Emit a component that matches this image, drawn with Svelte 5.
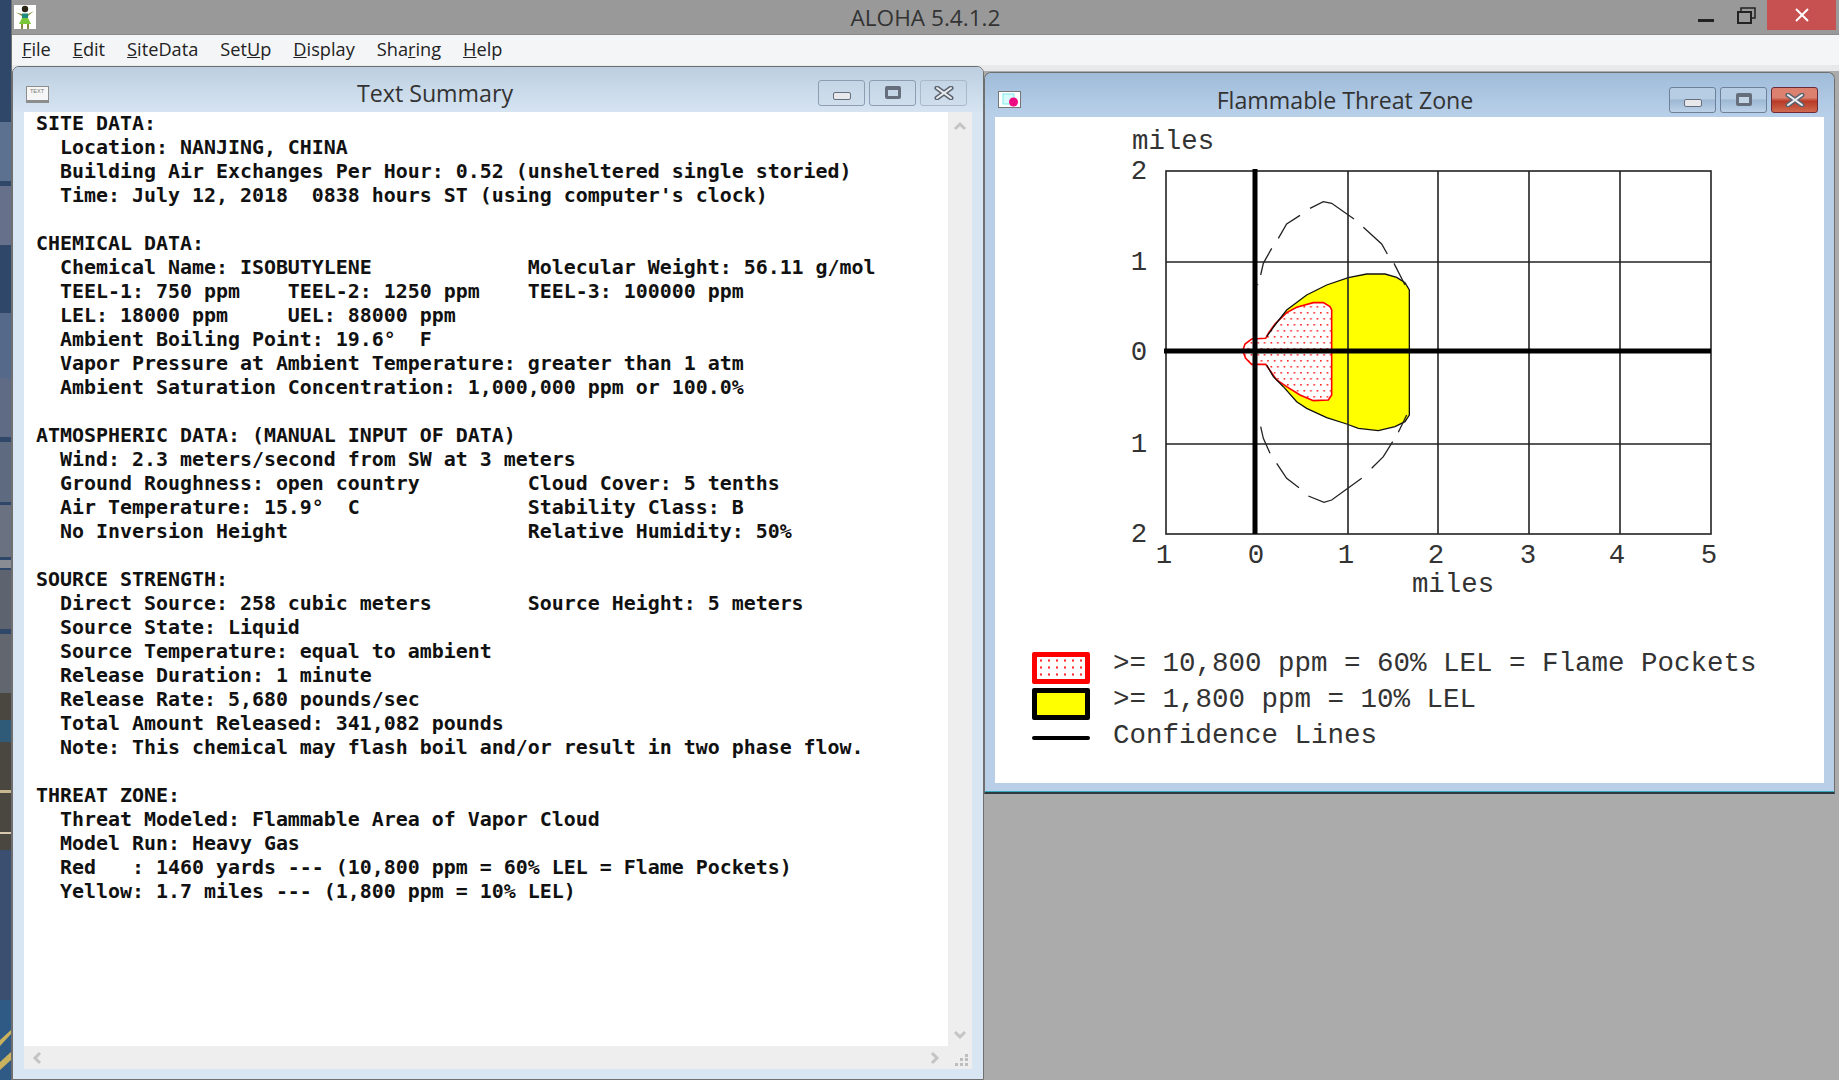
<script>
  const menus = [
    ['F', 'ile'], ['E', 'dit'], ['S', 'iteData'], ['Set', 'U', 'p'], ['D', 'isplay'], ['Sha', 'r', 'ing'], ['H', 'elp']
  ];

  const summary = `SITE DATA:
  Location: NANJING, CHINA
  Building Air Exchanges Per Hour: 0.52 (unsheltered single storied)
  Time: July 12, 2018  0838 hours ST (using computer's clock)

CHEMICAL DATA:
  Chemical Name: ISOBUTYLENE             Molecular Weight: 56.11 g/mol
  TEEL-1: 750 ppm    TEEL-2: 1250 ppm    TEEL-3: 100000 ppm
  LEL: 18000 ppm     UEL: 88000 ppm
  Ambient Boiling Point: 19.6°  F
  Vapor Pressure at Ambient Temperature: greater than 1 atm
  Ambient Saturation Concentration: 1,000,000 ppm or 100.0%

ATMOSPHERIC DATA: (MANUAL INPUT OF DATA)
  Wind: 2.3 meters/second from SW at 3 meters
  Ground Roughness: open country         Cloud Cover: 5 tenths
  Air Temperature: 15.9°  C              Stability Class: B
  No Inversion Height                    Relative Humidity: 50%

SOURCE STRENGTH:
  Direct Source: 258 cubic meters        Source Height: 5 meters
  Source State: Liquid
  Source Temperature: equal to ambient
  Release Duration: 1 minute
  Release Rate: 5,680 pounds/sec
  Total Amount Released: 341,082 pounds
  Note: This chemical may flash boil and/or result in two phase flow.

THREAT ZONE:
  Threat Modeled: Flammable Area of Vapor Cloud
  Model Run: Heavy Gas
  Red   : 1460 yards --- (10,800 ppm = 60% LEL = Flame Pockets)
  Yellow: 1.7 miles --- (1,800 ppm = 10% LEL)`;

  // outlines traced at 3x from (1100,120)
  const pts = (list) => list.map(([x, y]) => `${1100 + x / 3},${120 + y / 3}`).join(' ');

  const yellow = pts([
    [500, 650], [525, 615], [560, 570], [620, 525], [680, 495], [745, 473], [800, 462], [855, 462], [890, 472],
    [915, 488], [928, 510], [928, 885], [915, 905], [885, 920], [835, 932], [775, 925], [740, 912], [680, 893],
    [620, 865], [590, 845], [550, 800], [520, 770], [500, 735]
  ]);
  const red = pts([
    [428, 692], [435, 672], [455, 657], [497, 655], [505, 640], [525, 612], [560, 578], [590, 562], [640, 548],
    [670, 548], [690, 560], [695, 570], [695, 825], [685, 840], [640, 842], [600, 825], [560, 800], [530, 780],
    [497, 733], [455, 733], [437, 715]
  ]);
  const dashes = [
    [[472, 495], [474, 493]],
    [[482, 465], [490, 430], [515, 385]],
    [[535, 355], [560, 312], [600, 286]],
    [[630, 265], [670, 245], [695, 250], [762, 297]],
    [[790, 322], [845, 372], [862, 402]],
    [[882, 430], [915, 495]],
    [[482, 920], [490, 955], [510, 1000]],
    [[530, 1030], [560, 1075], [597, 1103]],
    [[625, 1128], [672, 1147], [695, 1140], [785, 1075]],
    [[815, 1045], [850, 1010], [878, 965]],
    [[895, 937], [920, 885]]
  ].map(pts);

  const gridX = [1348, 1438, 1529, 1620];
  const gridY = [262, 444];
  const xLabels = [[1164, '1'], [1256, '0'], [1346, '1'], [1436, '2'], [1528, '3'], [1617, '4'], [1709, '5']];
  const yLabels = [[179, '2'], [270, '1'], [360, '0'], [452, '1'], [542, '2']];

  const stripTiles = [
    [122, 59, '#5c7090'], [186, 59, '#66708a'], [313, 65, '#55698a'], [378, 59, '#5f6b84'],
    [442, 60, '#5e6a80'], [505, 52, '#6a7180'], [560, 8, '#8a8c94'], [570, 59, '#5d6470'], [634, 59, '#62666e']
  ];
</script>

{#snippet controls()}
  <div class="controls">
    <div class="ctl"><span class="ico-min"></span></div>
    <div class="ctl"><span class="ico-max"></span></div>
    <div class="ctl close">
      <svg width="20" height="14" viewBox="0 0 20 14">
        <path d="M3 2 L17 12 M17 2 L3 12" stroke="#5c6470" stroke-width="5" stroke-linecap="round" />
        <path d="M3 2 L17 12 M17 2 L3 12" stroke="#eef0f3" stroke-width="2" stroke-linecap="round" />
      </svg>
    </div>
  </div>
{/snippet}

<div class="app">
  <svg class="strip" width="11" height="1080" viewBox="0 0 11 1080">
    <rect width="11" height="1080" fill="#2f4869" />
    {#each stripTiles as [y, h, fill]}
      <rect {y} width="11" height={h} {fill} />
    {/each}
    <rect y="693" width="11" height="157" fill="#4a4640" />
    <rect y="720" width="11" height="22" fill="#2f5a78" />
    <rect y="790" width="11" height="3" fill="#c8b890" />
    <rect y="832" width="11" height="2" fill="#d8c8b0" />
    <rect y="850" width="11" height="150" fill="#3b5070" />
    <rect y="1000" width="11" height="80" fill="#2f5a85" />
    <path d="M0 1040 L11 1030 V1034 L0 1046 Z M0 1062 L11 1052 V1060 L0 1070 Z" fill="#c9b25e" />
  </svg>

  <div class="main">
    <header class="appbar">
      <svg class="appicon" width="22" height="24" viewBox="0 0 22 24">
        <rect width="22" height="24" fill="#fff" />
        <circle cx="11" cy="4" r="3.2" fill="#2a2412" />
        <path d="M2 7.5 L8 9 H14 L20 6 L14 11 H8 Z" fill="#8c8a40" />
        <path d="M8 8.5 H14 V13 H8 Z" fill="#1f8a80" />
        <path d="M8 13 H14 L17 19 H5 Z" fill="#7ac83a" />
        <path d="M8 19 V24 M14 19 V24" stroke="#8a8a3a" stroke-width="2" />
      </svg>
      <span class="apptitle">ALOHA 5.4.1.2</span>
      <div class="sysbtns">
        <svg class="sys-min" width="16" height="3"><rect width="16" height="3" fill="#222" /></svg>
        <svg class="sys-restore" width="19" height="17" viewBox="0 0 19 17">
          <path d="M4 4 V1 H18 V11 H14" fill="none" stroke="#222" stroke-width="1.5" />
          <rect x="1" y="5" width="13" height="11" fill="none" stroke="#222" stroke-width="2" />
        </svg>
        <div class="sys-close">
          <svg width="14" height="14" viewBox="0 0 14 14"><path d="M1 1 L13 13 M13 1 L1 13" stroke="#fff" stroke-width="2" /></svg>
        </div>
      </div>
    </header>

    <nav class="menubar">
      {#each menus as m}
        <span class="menu">
          {#if m.length === 2}<u>{m[0]}</u>{m[1]}{:else}{m[0]}<u>{m[1]}</u>{m[2]}{/if}
        </span>
      {/each}
    </nav>

    <div class="workspace">
      <section class="window summary">
        <div class="titlebar">
          <svg class="winicon" width="23" height="17" viewBox="0 0 23 17">
            <rect width="23" height="17" fill="#8d8d8d" />
            <rect x="1" y="1" width="21" height="13" fill="#f6f6f6" />
            <text x="11" y="7" text-anchor="middle" class="tiny">TEXT</text>
          </svg>
          <span class="wintitle">Text Summary</span>
          {@render controls()}
        </div>
        <div class="client-grid">
          <pre class="report">{summary}</pre>
          <div class="vscroll">
            <svg width="14" height="10" viewBox="0 0 14 10"><path d="M2 8 L7 3 L12 8" class="chev" /></svg>
            <svg width="14" height="10" viewBox="0 0 14 10"><path d="M2 2 L7 7 L12 2" class="chev" /></svg>
          </div>
          <div class="hscroll">
            <svg width="10" height="14" viewBox="0 0 10 14"><path d="M8 2 L3 7 L8 12" class="chev" /></svg>
            <svg width="10" height="14" viewBox="0 0 10 14"><path d="M2 2 L7 7 L2 12" class="chev" /></svg>
          </div>
          <div class="grip">
            <svg width="13" height="13" viewBox="0 0 13 13" fill="#bdbdbd">
              <rect x="10" y="1" width="3" height="3" /><rect x="5" y="5" width="3" height="3" /><rect x="10" y="5" width="3" height="3" />
              <rect x="0" y="10" width="3" height="3" /><rect x="5" y="10" width="3" height="3" /><rect x="10" y="10" width="3" height="3" />
            </svg>
          </div>
        </div>
      </section>

      <section class="window threat">
        <div class="titlebar">
          <svg class="winicon" width="23" height="18" viewBox="0 0 23 18">
            <rect x=".5" y=".5" width="22" height="16" fill="#fff" stroke="#777" />
            <rect x="5" y="3" width="11" height="10" fill="#d8fbfb" stroke="#7fecec" />
            <circle cx="15.5" cy="11" r="4.5" fill="#ee0a80" />
          </svg>
          <span class="wintitle">Flammable Threat Zone</span>
          {@render controls()}
        </div>
        <div class="client">
          <svg class="plot" width="828" height="533" viewBox="995 117 828 533">
            <defs>
              <pattern id="flame" width="6.6" height="12" patternUnits="userSpaceOnUse">
                <rect x="0" y="0" width="1.6" height="1.6" fill="#f22" />
                <rect x="3.3" y="6" width="1.6" height="1.6" fill="#f22" />
              </pattern>
            </defs>
            <text x="1132" y="149" class="plotlabel">miles</text>
            <text x="1453" y="592" text-anchor="middle" class="plotlabel">miles</text>

            <polygon points={yellow} fill="#ff0" />
            <polygon points={red} fill="#fff" />
            <polygon points={red} fill="url(#flame)" stroke="#f00" stroke-width="1.6" />
            <polyline points={yellow} fill="none" stroke="#111" stroke-width="1.3" />

            <rect x="1166" y="171" width="545" height="363" fill="none" stroke="#222" stroke-width="1.6" />
            {#each gridX as x}
              <line x1={x} x2={x} y1="171" y2="534" stroke="#222" stroke-width="1.6" />
            {/each}
            {#each gridY as y}
              <line x1="1166" x2="1711" y1={y} y2={y} stroke="#222" stroke-width="1.6" />
            {/each}
            <line x1="1255" x2="1255" y1="169" y2="534" stroke="#000" stroke-width="5" />
            <line x1="1164" x2="1711" y1="351" y2="351" stroke="#000" stroke-width="5" />

            {#each dashes as d}
              <polyline points={d} fill="none" stroke="#222" stroke-width="1.3" />
            {/each}

            {#each yLabels as [y, t]}
              <text x="1139" {y} text-anchor="middle" class="plotlabel">{t}</text>
            {/each}
            {#each xLabels as [x, t]}
              <text {x} y="563" text-anchor="middle" class="plotlabel">{t}</text>
            {/each}
          </svg>
          <div class="legend">
            <span class="swatch flame"></span><span class="entry">&gt;= 10,800 ppm = 60% LEL = Flame Pockets</span>
            <span class="swatch lel"></span><span class="entry">&gt;= 1,800 ppm = 10% LEL</span>
            <span class="swatch conf"></span><span class="entry">Confidence Lines</span>
          </div>
        </div>
      </section>
    </div>
  </div>
</div>

<style>
  :global(body) {
    margin: 0;
    background: #ababab;
  }

  .app {
    display: flex;
    width: 1839px;
    height: 1080px;
    overflow: hidden;
    font-family: "Open Sans", sans-serif;
  }

  .strip {
    flex: none;
    display: block;
    border-right: 1px solid #6e6e6e;
    box-sizing: content-box;
  }

  .main {
    flex: 1;
    min-width: 0;
    display: flex;
    flex-direction: column;
  }

  .appbar {
    flex: none;
    position: relative;
    height: 35px;
    display: flex;
    align-items: center;
    justify-content: center;
    background: #999;
    border-bottom: 1px solid #8a8a8a;
    box-sizing: border-box;
  }

  .appicon {
    position: absolute;
    left: 2px;
    top: 5px;
  }

  .apptitle {
    color: #333;
    font-size: 22.6px;
  }

  .sysbtns {
    position: absolute;
    right: 3px;
    top: 0;
    display: flex;
    align-items: flex-start;
  }

  .sys-min {
    margin-top: 19px;
    margin-right: 23px;
  }

  .sys-restore {
    margin-top: 7px;
    margin-right: 11px;
  }

  .sys-close {
    width: 69px;
    height: 30px;
    background: #c75050;
    display: flex;
    align-items: center;
    justify-content: center;
  }

  .menubar {
    flex: none;
    height: 30px;
    display: flex;
    align-items: center;
    gap: 22px;
    padding: 0 0 2px 10px;
    box-sizing: border-box;
    background: #f4f5f7;
    color: #222;
    font-size: 18.2px;
  }

  .workspace {
    flex: 1;
    min-height: 0;
    display: flex;
    align-items: flex-start;
    background: linear-gradient(#e8e9eb 0 6px, #ababab 6px);
  }

  .window {
    flex: none;
    display: flex;
    flex-direction: column;
    box-sizing: border-box;
    border: 1px solid #6f6f6f;
    border-radius: 7px 7px 0 0;
  }

  .summary {
    width: 972px;
    height: 1014px;
    margin-top: 1px;
    background: #d8e5f2;
  }

  .threat {
    width: 851px;
    height: 722px;
    margin-top: 7px;
    background: #b9cfe8;
    border-bottom: 2px solid #2a3a40;
    box-shadow: inset 0 -1px 0 #33aabb;
  }

  .titlebar {
    flex: none;
    display: flex;
    align-items: center;
    box-sizing: border-box;
    border-radius: 7px 7px 0 0;
  }

  .summary .titlebar {
    height: 45px;
    padding: 6px 16px 0 13px;
    background: linear-gradient(#bccfe0, #d6e4f2);
  }

  .threat .titlebar {
    height: 44px;
    padding: 9px 16px 0 13px;
    background: linear-gradient(#9fbcd9, #b9d0ea);
  }

  .winicon {
    flex: none;
    display: block;
  }

  .summary .winicon {
    margin-top: 3px;
  }

  .tiny {
    font: 5.5px "Liberation Sans", sans-serif;
    fill: #777;
  }

  .wintitle {
    flex: 1;
    text-align: center;
    color: #333;
    font-size: 23.2px;
  }

  .summary .wintitle {
    padding-left: 3px;
  }

  .controls {
    flex: none;
    display: flex;
    gap: 4px;
  }

  .ctl {
    width: 47px;
    height: 26px;
    box-sizing: border-box;
    display: flex;
    align-items: center;
    justify-content: center;
    border: 1px solid #8c9db4;
    border-radius: 3px;
    background: linear-gradient(#c4d5e6, #d0deec);
  }

  .ico-min {
    width: 16px;
    height: 6px;
    margin-top: 6px;
    border: 1.5px solid #666e7c;
    border-radius: 2px;
    background: #e6e8eb;
  }

  .ico-max {
    width: 10px;
    height: 6px;
    border: 3px solid #666e7c;
    border-top-width: 4px;
    border-radius: 2px;
    background: #c4d5e6;
  }

  .summary .ctl.close {
    border-color: #aab8c9;
  }

  .threat .ctl {
    background: linear-gradient(#b6cde3 0 45%, #9db8d4 50%, #bcd2e8);
    border-color: #6f8198;
  }

  .threat .ctl.close {
    background: linear-gradient(#dc8070 0 40%, #b83a26 55%, #d06a50);
    border-color: #6a2a38;
  }

  .client-grid {
    flex: 1;
    min-height: 0;
    display: grid;
    grid-template-columns: 1fr 24px;
    grid-template-rows: 1fr 23px;
    margin: 0 11px 10px;
    background: #eee;
  }

  .report {
    margin: 0;
    padding: 0 0 0 12px;
    background: #fff;
    color: #111;
    font: bold 19.93px/24px "DejaVu Sans Mono", monospace;
    overflow: hidden;
  }

  .vscroll {
    display: flex;
    flex-direction: column;
    align-items: center;
    justify-content: space-between;
    padding: 9px 0 6px;
  }

  .hscroll {
    display: flex;
    align-items: center;
    justify-content: space-between;
    padding: 0 8px;
  }

  .grip {
    display: flex;
    align-items: flex-end;
    justify-content: flex-end;
    padding: 0 4px 3px 0;
  }

  .chev {
    fill: none;
    stroke: #c4c4c4;
    stroke-width: 3;
  }

  .client {
    flex: 1;
    min-height: 0;
    margin: 0 10px 9px;
    background: #fff;
    display: flex;
    flex-direction: column;
  }

  .plot {
    flex: none;
    display: block;
  }

  .plotlabel {
    font: 27.4px "Liberation Mono", monospace;
    fill: #333;
  }

  .legend {
    display: grid;
    grid-template-columns: 58px 1fr;
    grid-auto-rows: 36px;
    column-gap: 23px;
    align-items: center;
    padding-left: 37px;
    color: #333;
    font: 27.5px "Liberation Mono", monospace;
  }

  .entry {
    padding-bottom: 9px;
  }

  .swatch {
    display: block;
    box-sizing: border-box;
    height: 32px;
    border-radius: 2px;
  }

  .swatch.flame {
    border: 5px solid #f00;
    margin-bottom: 1px;
    background: #fff radial-gradient(circle, #f33 1px, transparent 1.3px) 0 0 / 8px 7px;
  }

  .swatch.lel {
    border: 5px solid #000;
    background: #ff0;
  }

  .swatch.conf {
    height: 4px;
    margin-bottom: 4px;
    background: #000;
  }
</style>
